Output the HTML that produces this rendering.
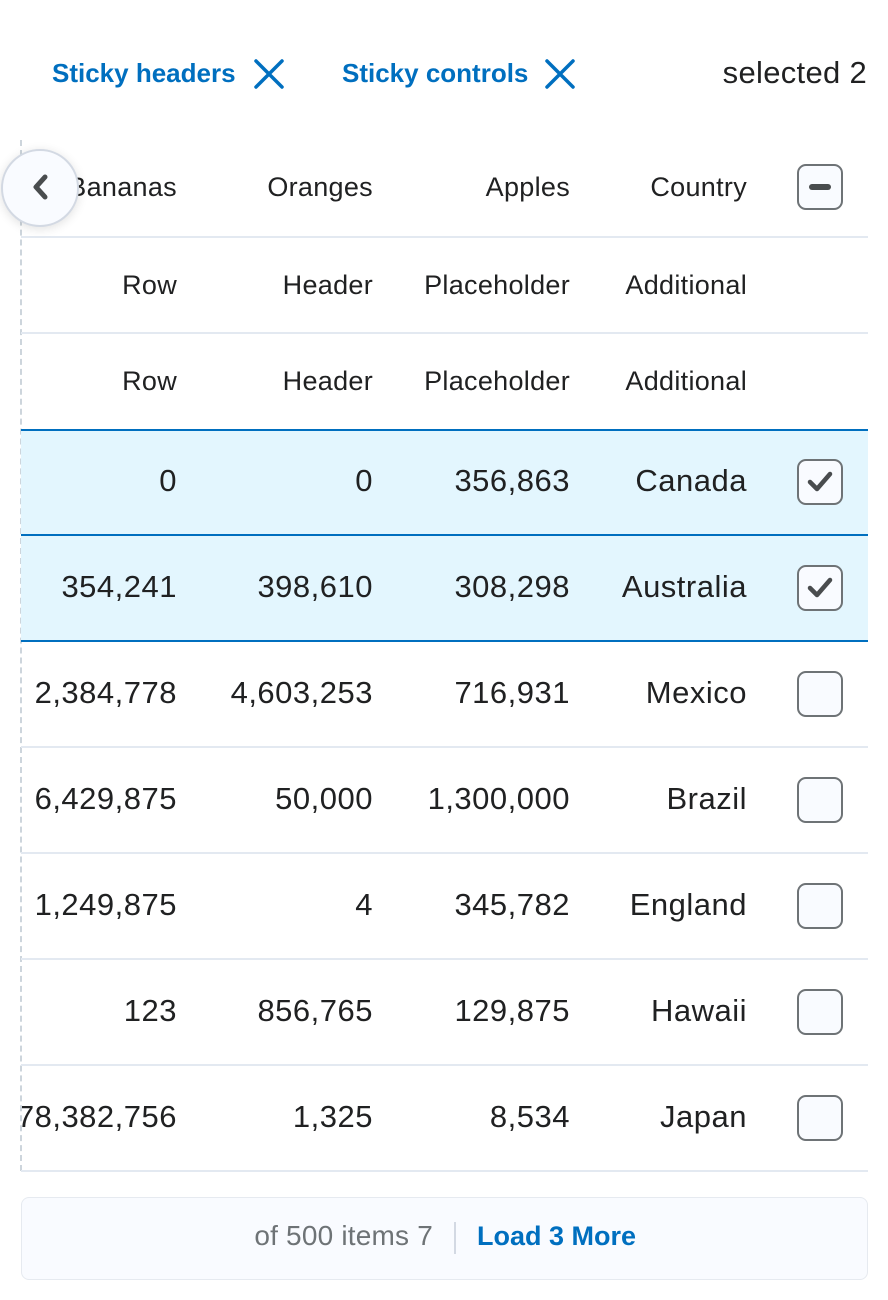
<!DOCTYPE html>
<html><head><meta charset="utf-8"><style>
*{margin:0;padding:0;box-sizing:border-box}
body{width:888px;height:1300px;background:#fff;position:relative;overflow:hidden;font-family:"Liberation Sans",sans-serif;color:#202122}
.a{position:absolute;white-space:nowrap}
.t{position:absolute;text-align:right;white-space:nowrap;line-height:30px}
.h{font-size:27px;letter-spacing:0.3px}
.n{font-size:31px;letter-spacing:0.5px}
.line{position:absolute;left:21px;width:847px;height:2px;background:#e3e9f1}
.bl{position:absolute;left:21px;width:847px;height:2px;background:#006fbf}
.cb{position:absolute;left:797px;width:46px;height:46px;border:2px solid #6e7376;border-radius:9px;background:#f9fbff}
</style></head><body>
<div class="a" style="left:52px;top:58px;font-size:26px;font-weight:bold;color:#006fbf">Sticky headers</div>
<svg class="a" style="left:253px;top:58px" width="32" height="32" viewBox="0 0 32 32"><path d="M3 3L29 29M29 3L3 29" stroke="#006fbf" stroke-width="3.5" stroke-linecap="round"/></svg>
<div class="a" style="left:342px;top:58px;font-size:26px;font-weight:bold;color:#006fbf">Sticky controls</div>
<svg class="a" style="left:544px;top:58px" width="32" height="32" viewBox="0 0 32 32"><path d="M3 3L29 29M29 3L3 29" stroke="#006fbf" stroke-width="3.5" stroke-linecap="round"/></svg>
<div class="a" style="right:21px;top:55px;font-size:31px;letter-spacing:0.3px;color:#202122">selected 2</div>

<div style="position:absolute;left:20px;top:140px;height:1031px;border-left:2px dashed #cdd5dc"></div>
<div style="position:absolute;left:21px;top:430px;width:847px;height:211px;background:#e3f6fe"></div>

<div class="line" style="top:236px"></div>
<div class="line" style="top:332px"></div>
<div class="bl" style="top:429px"></div>
<div class="bl" style="top:534px"></div>
<div class="bl" style="top:640px"></div>
<div class="line" style="top:746px"></div>
<div class="line" style="top:852px"></div>
<div class="line" style="top:958px"></div>
<div class="line" style="top:1064px"></div>
<div class="line" style="top:1170px"></div>

<div class="t h" style="right:711px;top:172px">Bananas</div>
<div class="t h" style="right:515px;top:172px">Oranges</div>
<div class="t h" style="right:318px;top:172px">Apples</div>
<div class="t h" style="right:141px;top:172px">Country</div>
<div class="cb" style="top:164px"><div style="position:absolute;left:10px;top:18px;width:22px;height:6px;border-radius:3px;background:#494c4e"></div></div>

<div class="t h" style="right:711px;top:270px">Row</div>
<div class="t h" style="right:515px;top:270px">Header</div>
<div class="t h" style="right:318px;top:270px">Placeholder</div>
<div class="t h" style="right:141px;top:270px">Additional</div>
<div class="t h" style="right:711px;top:366px">Row</div>
<div class="t h" style="right:515px;top:366px">Header</div>
<div class="t h" style="right:318px;top:366px">Placeholder</div>
<div class="t h" style="right:141px;top:366px">Additional</div>

<div class="t n" style="right:711px;top:466px">0</div>
<div class="t n" style="right:515px;top:466px">0</div>
<div class="t n" style="right:318px;top:466px">356,863</div>
<div class="t n" style="right:141px;top:466px">Canada</div>
<div class="cb" style="top:459px"><svg width="42" height="42" viewBox="0 0 42 42" style="position:absolute;left:0;top:0"><path d="M11 21L18 28L31 13" fill="none" stroke="#494c4e" stroke-width="4.5" stroke-linecap="round" stroke-linejoin="round"/></svg></div>

<div class="t n" style="right:711px;top:572px">354,241</div>
<div class="t n" style="right:515px;top:572px">398,610</div>
<div class="t n" style="right:318px;top:572px">308,298</div>
<div class="t n" style="right:141px;top:572px">Australia</div>
<div class="cb" style="top:565px"><svg width="42" height="42" viewBox="0 0 42 42" style="position:absolute;left:0;top:0"><path d="M11 21L18 28L31 13" fill="none" stroke="#494c4e" stroke-width="4.5" stroke-linecap="round" stroke-linejoin="round"/></svg></div>

<div class="t n" style="right:711px;top:678px">2,384,778</div>
<div class="t n" style="right:515px;top:678px">4,603,253</div>
<div class="t n" style="right:318px;top:678px">716,931</div>
<div class="t n" style="right:141px;top:678px">Mexico</div>
<div class="cb" style="top:671px"></div>

<div class="t n" style="right:711px;top:784px">6,429,875</div>
<div class="t n" style="right:515px;top:784px">50,000</div>
<div class="t n" style="right:318px;top:784px">1,300,000</div>
<div class="t n" style="right:141px;top:784px">Brazil</div>
<div class="cb" style="top:777px"></div>

<div class="t n" style="right:711px;top:890px">1,249,875</div>
<div class="t n" style="right:515px;top:890px">4</div>
<div class="t n" style="right:318px;top:890px">345,782</div>
<div class="t n" style="right:141px;top:890px">England</div>
<div class="cb" style="top:883px"></div>

<div class="t n" style="right:711px;top:996px">123</div>
<div class="t n" style="right:515px;top:996px">856,765</div>
<div class="t n" style="right:318px;top:996px">129,875</div>
<div class="t n" style="right:141px;top:996px">Hawaii</div>
<div class="cb" style="top:989px"></div>

<div style="position:absolute;left:22px;top:1090px;width:160px;height:60px;overflow:hidden"><div class="t n" style="right:5px;top:12px">78,382,756</div></div>
<div class="t n" style="right:515px;top:1102px">1,325</div>
<div class="t n" style="right:318px;top:1102px">8,534</div>
<div class="t n" style="right:141px;top:1102px">Japan</div>
<div class="cb" style="top:1095px"></div>

<div style="position:absolute;left:1px;top:149px;width:78px;height:78px;border-radius:50%;background:#f9fbff;border:2px solid #d3d9e3;box-shadow:0 2px 10px rgba(0,0,0,0.12)">
<svg width="78" height="78" viewBox="0 0 78 78" style="position:absolute;left:-2px;top:-2px"><path d="M44 28L35 38L44 48" fill="none" stroke="#494c4e" stroke-width="5" stroke-linecap="round" stroke-linejoin="round"/></svg></div>

<div style="position:absolute;left:21px;top:1197px;width:847px;height:83px;border:1px solid #e6eaf0;border-radius:8px;background:#f9fbff"></div>
<div class="a" style="right:455px;top:1220px;font-size:28px;letter-spacing:0.2px;color:#6e7376">of 500 items 7</div>
<div style="position:absolute;left:454px;top:1222px;width:2px;height:32px;background:#d3d9e3"></div>
<div class="a" style="left:477px;top:1221px;font-size:27px;font-weight:bold;color:#006fbf">Load 3 More</div>
</body></html>
